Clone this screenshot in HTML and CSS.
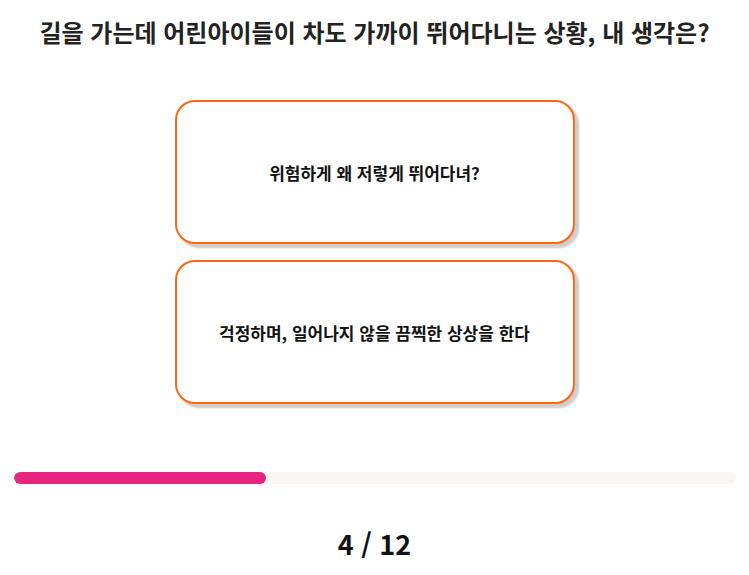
FILE: index.html
```html
<!DOCTYPE html>
<html lang="ko">
<head>
<meta charset="utf-8">
<title>Quiz</title>
<link rel="stylesheet" href="styles.css">
</head>
<body>
<main class="quiz">
  <h1 class="question">길을 가는데 어린아이들이 차도 가까이 뛰어다니는 상황, 내 생각은?</h1>
  <div class="options">
    <button class="option">위험하게 왜 저렇게 뛰어다녀?</button>
    <button class="option">걱정하며, 일어나지 않을 끔찍한 상상을 한다</button>
  </div>
  <div class="progress"><div class="progress-fill" style="width: 35%"></div></div>
  <div class="counter">4 / 12</div>
</main>
</body>
</html>
```
FILE: styles.css
```css
* { box-sizing: border-box; }
html, body { margin: 0; padding: 0; background: #fff; }
body {
  font-family: "Noto Sans CJK KR", "Noto Sans", sans-serif;
  color: #111;
}
.quiz {
  display: flex;
  flex-direction: column;
  align-items: center;
  padding-top: 17px;
}
.question {
  margin: 0;
  font-size: 24px;
  line-height: 30px;
  font-weight: 700;
  color: #222;
  text-align: center;
  white-space: nowrap;
}
.options {
  margin-top: 53px;
  display: flex;
  flex-direction: column;
  gap: 16px;
}
.option {
  width: 400px;
  height: 144px;
  border: 2px solid #ff6512;
  border-radius: 20px;
  background: #fff;
  box-shadow: 4px 4px 2px #cfcfcf;
  font-family: inherit;
  font-size: 17px;
  font-weight: 700;
  color: #111;
  display: flex;
  align-items: center;
  justify-content: center;
  padding: 0 20px;
}
.progress {
  margin-top: 68px;
  width: 722px;
  height: 12px;
  border-radius: 6px;
  background: #faf7f3;
  overflow: hidden;
}
.progress-fill {
  height: 100%;
  background: #e8247f;
  border-radius: 6px;
}
.counter {
  margin-top: 44px;
  font-size: 27px;
  line-height: 32px;
  font-weight: 700;
  color: #111;
}
```
